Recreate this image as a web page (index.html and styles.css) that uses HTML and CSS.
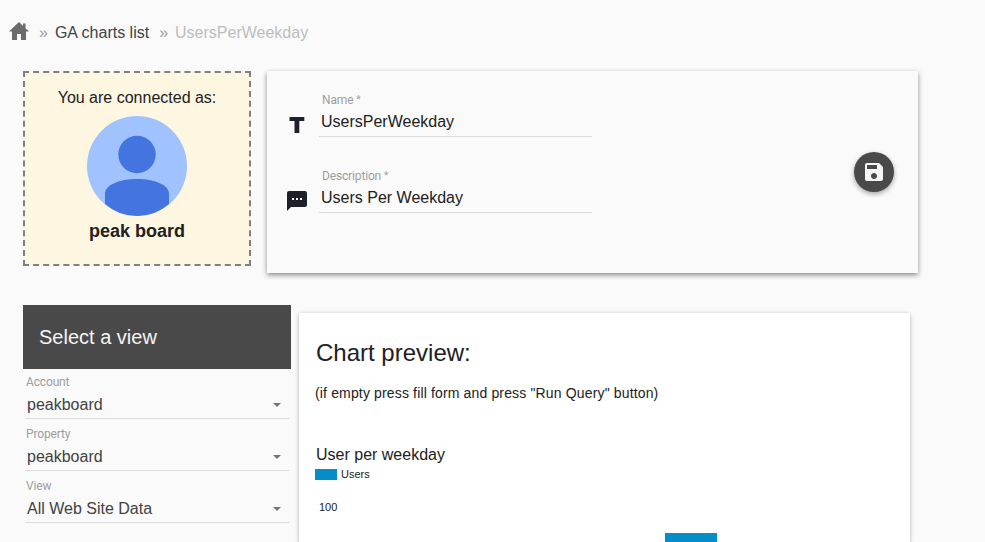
FILE: index.html
```html
<!DOCTYPE html>
<html lang="en">
<head>
    <meta charset="UTF-8">
    <title>UsersPerWeekday</title>
    <link rel="stylesheet" href="styles.css">
</head>
<body>
    <nav class="breadcrumb">
        <svg class="home-icon" viewBox="0 0 20 18" width="20" height="18"><path d="M8 18v-6h4v6h5V9.500h3L16.500 6.300V1.500h-2.500v2.500L10 0 0 9.500h3V18z"/></svg>
        <span class="sep">»</span>
        <span class="crumb">GA charts list</span>
        <span class="sep">»</span>
        <span class="crumb current">UsersPerWeekday</span>
    </nav>

    <section class="top-row">
        <div class="connected">
            <p class="connected-label">You are connected as:</p>
            <svg class="avatar" viewBox="0 0 100 100" width="100" height="100">
                <circle cx="50" cy="50" r="50" fill="#a0c3ff"/>
                <circle cx="50" cy="38.500" r="18.700" fill="#4374e0"/>
                <path d="M18 88V78C18 69 32 63 50 63S82 69 82 78V88A50 50 0 0 1 50 100 50 50 0 0 1 18 88z" fill="#4374e0"/>
            </svg>
            <p class="connected-name">peak board</p>
        </div>

        <form class="details-card">
            <div class="fields">
                <div class="field-row">
                    <svg class="field-icon" viewBox="0 0 24 24" width="24" height="24"><path d="M4.500 4v4h5v12h4.800V8h5V4z"/></svg>
                    <div class="field">
                        <label>Name <span class="required">*</span></label>
                        <div class="field-value">UsersPerWeekday</div>
                    </div>
                </div>
                <div class="field-row">
                    <svg class="field-icon" viewBox="0 0 24 24" width="24" height="24"><path d="M20 2H4c-1.100 0-2 .9-2 2v18l4-4h14c1.100 0 2-.9 2-2V4c0-1.100-.9-2-2-2zM9 11H7V9h2v2zm4 0h-2V9h2v2zm4 0h-2V9h2v2z"/></svg>
                    <div class="field">
                        <label>Description <span class="required">*</span></label>
                        <div class="field-value">Users Per Weekday</div>
                    </div>
                </div>
            </div>
            <button class="save-button" type="button">
                <svg viewBox="0 0 24 24" width="24" height="24"><path d="M17 3H5c-1.110 0-2 .9-2 2v14c0 1.100.89 2 2 2h14c1.100 0 2-.9 2-2V7l-4-4zm-5 16c-1.660 0-3-1.340-3-3s1.340-3 3-3 3 1.340 3 3-1.340 3-3 3zm3-10H5V5h10v4z"/></svg>
            </button>
        </form>
    </section>

    <section class="bottom-row">
        <aside class="view-panel">
            <h2 class="view-title">Select a view</h2>
            <div class="select-field">
                <label>Account</label>
                <div class="select-value">peakboard<span class="arrow"></span></div>
            </div>
            <div class="select-field">
                <label>Property</label>
                <div class="select-value">peakboard<span class="arrow"></span></div>
            </div>
            <div class="select-field">
                <label>View</label>
                <div class="select-value">All Web Site Data<span class="arrow"></span></div>
            </div>
        </aside>

        <main class="chart-card">
            <h1>Chart preview:</h1>
            <p class="chart-hint">(if empty press fill form and press "Run Query" button)</p>
            <h3 class="chart-title">User per weekday</h3>
            <div class="legend"><span class="legend-swatch"></span>Users</div>
            <div class="plot">
                <span class="tick">100</span>
                <div class="bar"></div>
            </div>
        </main>
    </section>
</body>
</html>
```
FILE: styles.css
```css
html, body {
    height: 542px;
    overflow: hidden;
}
body {
    margin: 0;
    background-color: #fafafa;
    font-family: "Liberation Sans", Arial, sans-serif;
    color: #212121;
}
p, h1, h2, h3 {
    margin: 0;
    font-weight: 400;
}

.breadcrumb {
    display: flex;
    align-items: center;
    height: 18px;
    padding: 24px 0 0 9px;
    font-size: 16px;
}
.home-icon {
    margin-bottom: 4px;
    fill: #6b6b6b;
}
.sep {
    margin: 0 7px 0 10px;
    color: #9e9e9e;
}
.crumb {
    color: #424242;
}
.crumb.current {
    color: #bdbdbd;
}

.top-row {
    display: flex;
    align-items: flex-start;
    gap: 16px;
    margin: 29px 0 0 23px;
}
.connected {
    box-sizing: border-box;
    width: 228px;
    height: 195px;
    padding-top: 15px;
    border: 2px dashed #808080;
    background-color: #fdf6e0;
    text-align: center;
    font-size: 16px;
}
.connected-label {
    line-height: 20px;
}
.avatar {
    display: block;
    margin: 8px auto 0;
}
.connected-name {
    margin-top: 5px;
    font-weight: 700;
    font-size: 18px;
    line-height: 21px;
}

.details-card {
    display: flex;
    width: 651px;
    height: 202px;
    box-sizing: border-box;
    padding: 22px 24px 0 18px;
    background-color: #fafafa;
    box-shadow: 0 2px 5px rgba(0, 0, 0, 0.45);
}
.fields {
    width: 307px;
}
.field-row {
    display: flex;
    align-items: flex-end;
    gap: 10px;
    margin-bottom: 32px;
}
.field-icon {
    flex: none;
    fill: #1d2129;
}
.field {
    flex: 1;
    border-bottom: 1px solid #dcdcdc;
    padding: 0 2px 4px;
}
.field label {
    display: block;
    padding-left: 1px;
    font-family: Roboto, sans-serif;
    font-size: 12px;
    line-height: 14px;
    letter-spacing: -0.15px;
    color: #9e9e9e;
}
.required {
    font-size: 10px;
    vertical-align: 1px;
}
.field-value {
    margin-top: 5px;
    font-size: 16px;
    line-height: 20px;
}
.save-button {
    flex: none;
    width: 40px;
    height: 40px;
    margin: 59px 0 0 auto;
    padding: 8px;
    border: 0;
    border-radius: 50%;
    background-color: #494949;
    box-shadow: 0 2px 5px rgba(0, 0, 0, 0.35);
}
.save-button svg {
    display: block;
    fill: #f5f5f5;
}

.bottom-row {
    display: flex;
    align-items: flex-start;
    gap: 8px;
    margin: 32px 0 0 23px;
}
.view-panel {
    width: 268px;
}
.view-title {
    height: 64px;
    padding-left: 16px;
    background-color: #494949;
    color: #f5f5f5;
    font-size: 20px;
    line-height: 64px;
}
.select-field {
    margin: 0 2px 2px;
    height: 50px;
    box-sizing: border-box;
    padding-top: 6px;
    border-bottom: 1px solid #dcdcdc;
}
.select-field label {
    display: block;
    padding-left: 1px;
    font-family: Roboto, sans-serif;
    font-size: 12px;
    line-height: 14px;
    letter-spacing: -0.15px;
    color: #9e9e9e;
}
.select-value {
    display: flex;
    align-items: center;
    justify-content: space-between;
    margin-top: 6px;
    padding: 0 8px 0 2px;
    font-size: 16px;
    line-height: 20px;
    color: #424242;
}
.arrow {
    width: 0;
    height: 0;
    border-left: 4px solid transparent;
    border-right: 4px solid transparent;
    border-top: 4px solid #757575;
}

.chart-card {
    width: 611px;
    height: 229px;
    box-sizing: border-box;
    margin-top: 8px;
    padding: 26px 16px 0;
    background-color: #fff;
    border-radius: 2px 2px 0 0;
    box-shadow: 0 1px 4px rgba(0, 0, 0, 0.3);
}
.chart-card h1 {
    padding-left: 1px;
    font-size: 24px;
    line-height: 28px;
}
.chart-hint {
    margin-top: 18px;
    font-size: 14px;
    line-height: 16px;
    letter-spacing: 0.15px;
}
.chart-title {
    margin-top: 44px;
    padding-left: 1px;
    font-size: 16px;
    line-height: 20px;
}
.legend {
    display: flex;
    align-items: center;
    gap: 4px;
    margin-top: 2px;
    font-size: 11px;
    line-height: 14px;
}
.legend-swatch {
    width: 22px;
    height: 11px;
    background-color: #058dc7;
}
.plot {
    display: flex;
    align-items: flex-start;
    margin-top: 20px;
    font-size: 11px;
    line-height: 13px;
}
.tick {
    margin-left: 4px;
    width: 346px;
}
.bar {
    width: 52px;
    height: 9px;
    margin-top: 32px;
    background-color: #058dc7;
}
```
